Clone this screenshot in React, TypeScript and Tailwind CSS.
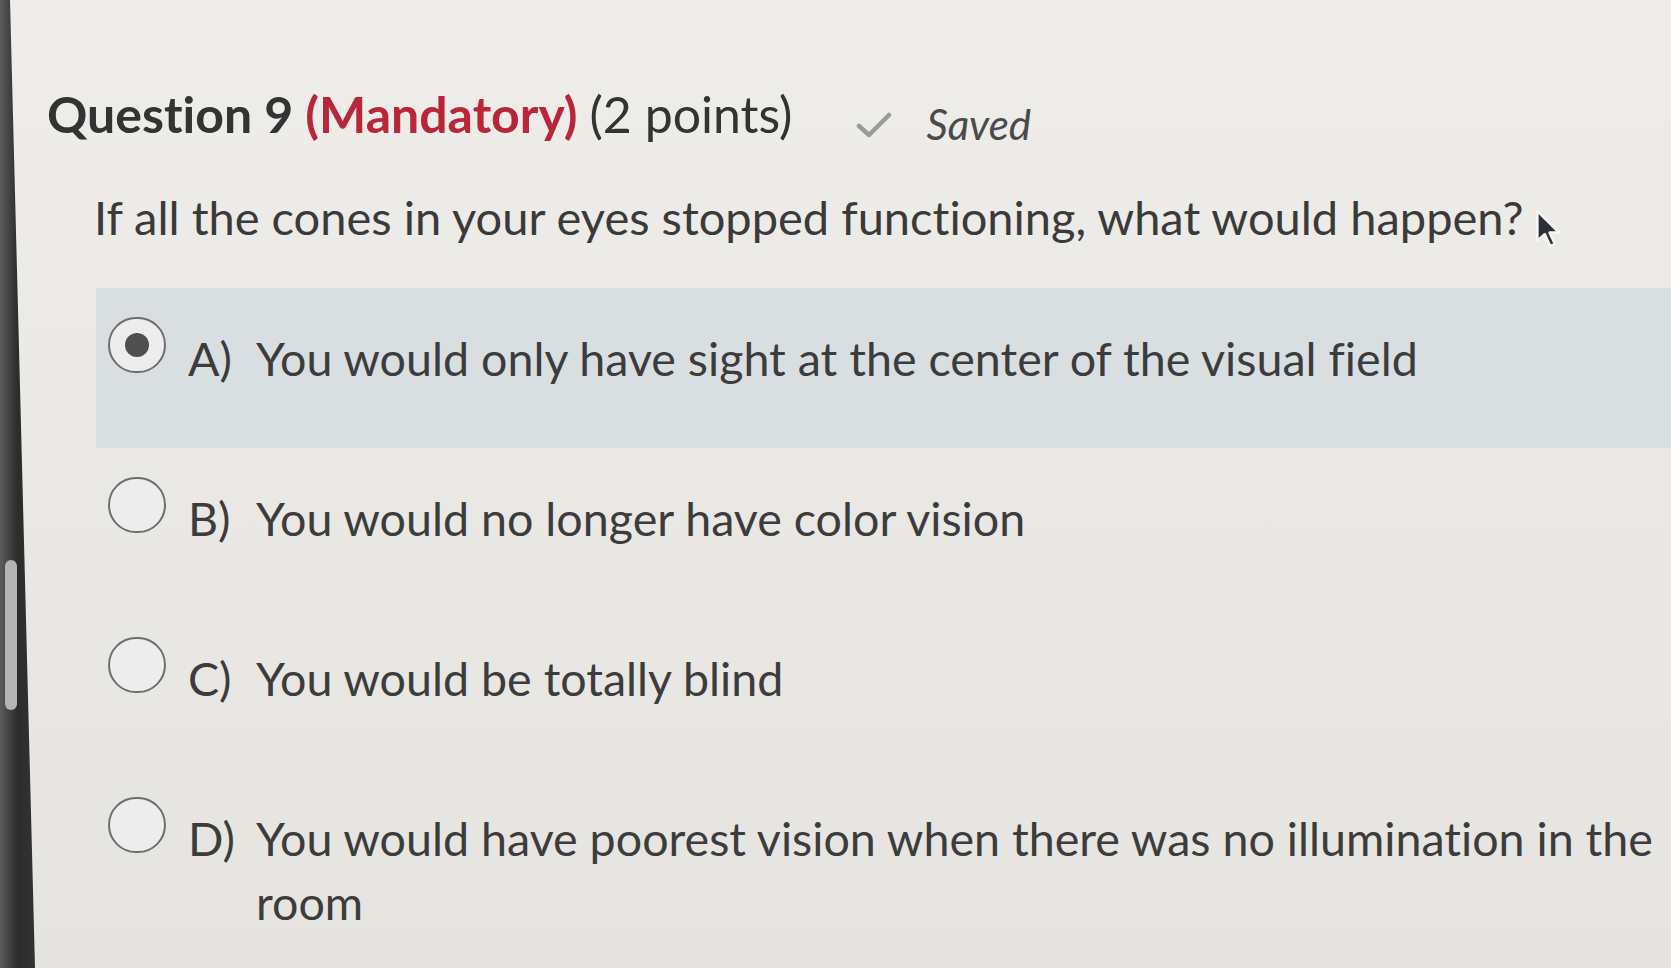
import React from "react";

function Radio({ checked }: { checked?: boolean }) {
  return (
    <div className="w-[58px] h-[56px] shrink-0 rounded-full border-[2.5px] border-[#6e6e6e] bg-[#ecedec] flex items-center justify-center">
      {checked && <div className="w-[24px] h-[24px] rounded-full bg-[#4f4f4f]" />}
    </div>
  );
}

function Cursor() {
  return (
    <svg width="30" height="46" viewBox="0 0 28 42" className="shrink-0 ml-[10px] mt-[20px]">
      <path d="M4 3 L4 31 L11 25 L16 36 L20.5 34 L15.5 23.5 L24.5 23.5 Z" fill="#2b3136" stroke="#f6f6f4" strokeWidth="2.5" strokeLinejoin="round" />
    </svg>
  );
}

function Option({
  letter,
  text,
  checked,
  highlight,
}: {
  letter: string;
  text: React.ReactNode;
  checked?: boolean;
  highlight?: boolean;
}) {
  return (
    <div
      className={
        "flex items-start pl-[12px] pt-[29px] h-[160px] " +
        (highlight ? "bg-[#d9dfe1]" : "")
      }
    >
      <Radio checked={checked} />
      <div className="flex pl-[22px] pt-[9px] text-[46.6px] leading-[64px] text-[#3c3c3c]">
        <span className="w-[68px] shrink-0">{letter}</span>
        <span>{text}</span>
      </div>
    </div>
  );
}

export default function App() {
  return (
    <div className="w-[1671px] h-[968px] flex overflow-hidden bg-gradient-to-b from-[#eeede9] to-[#e5e4e0] font-['Lato',sans-serif] [font-variant-ligatures:none]">
      <div className="w-[36px] shrink-0 bg-gradient-to-r from-[#5c5c5c] via-[#2c2c2c] to-[#333] [clip-path:polygon(0_0,10px_0,35px_100%,0_100%)] pt-[560px] pl-[5px]">
        <div className="w-[12px] h-[150px] rounded-full bg-[#b4b4b4]" />
      </div>
      <div className="flex-1 pl-[11px] pt-[84px]">
        <div className="flex items-baseline text-[50px] leading-[60px] text-[#333]">
          <span className="font-bold">Question 9</span>
          <span className="font-bold text-[#b8263a] ml-[12px]">(Mandatory)</span>
          <span className="ml-[12px]">(2 points)</span>
          <svg width="36" height="28" viewBox="0 0 36 28" className="ml-[64px] self-center mt-[18px]">
            <path d="M3 15 L13 24 L33 4" fill="none" stroke="#9a9a9a" strokeWidth="4.5" strokeLinecap="round" strokeLinejoin="round" />
          </svg>
          <span className="italic text-[42px] text-[#4a4a4a] ml-[34px] relative top-[7px]">Saved</span>
        </div>
        <div className="ml-[47px] mt-[40px] text-[47px] leading-[60px] text-[#3a3a3a] flex items-start">
          <span>If all the cones in your eyes stopped functioning, what would happen?</span>
          <Cursor />
        </div>
        <div className="ml-[49px] mt-[35px] flex flex-col">
          <Option letter="A)" text="You would only have sight at the center of the visual field" checked highlight />
          <Option letter="B)" text="You would no longer have color vision" />
          <Option letter="C)" text="You would be totally blind" />
          <Option letter="D)" text={<>You would have poorest vision when there was no illumination in the room</>} />
        </div>
      </div>
    </div>
  );
}
